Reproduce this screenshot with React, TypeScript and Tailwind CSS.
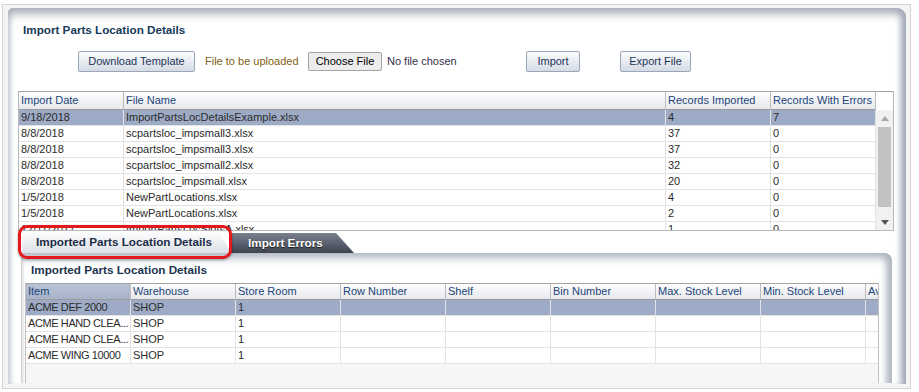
import React from "react";

/**
 * Import Parts Location Details screen (ADF style panel with file grid
 * and a tabbed detail table below).
 */

const FILE_COLS = [
  { label: "Import Date", w: "w-[105px]" },
  { label: "File Name", w: "w-[542px]" },
  { label: "Records Imported", w: "w-[105px]" },
  { label: "Records With Errors", w: "w-[105px]" },
];

const FILE_ROWS = [
  ["9/18/2018", "ImportPartsLocDetailsExample.xlsx", "4", "7"],
  ["8/8/2018", "scpartsloc_impsmall3.xlsx", "37", "0"],
  ["8/8/2018", "scpartsloc_impsmall3.xlsx", "37", "0"],
  ["8/8/2018", "scpartsloc_impsmall2.xlsx", "32", "0"],
  ["8/8/2018", "scpartsloc_impsmall.xlsx", "20", "0"],
  ["1/5/2018", "NewPartLocations.xlsx", "4", "0"],
  ["1/5/2018", "NewPartLocations.xlsx", "2", "0"],
  ["12/11/2017", "ImportPartsLocSlotsA.xlsx", "1", "0"],
];

const PART_COLS = [
  "Item",
  "Warehouse",
  "Store Room",
  "Row Number",
  "Shelf",
  "Bin Number",
  "Max. Stock Level",
  "Min. Stock Level",
  "Available",
];

const PART_ROWS = [
  ["ACME DEF 2000", "SHOP", "1"],
  ["ACME HAND CLEA...", "SHOP", "1"],
  ["ACME HAND CLEA...", "SHOP", "1"],
  ["ACME WING 10000", "SHOP", "1"],
];

function AdfButton({ label, w }: { label: string; w: string }) {
  return (
    <button
      className={`${w} h-[21px] shrink-0 rounded-[2px] border border-[#9ba7b9] bg-[linear-gradient(#fbfcfd,#d5dbe5)] text-[11px] text-[#1d3557]`}
    >
      {label}
    </button>
  );
}

export default function App() {
  return (
    <div className="relative h-[392px] w-[919px] overflow-hidden bg-white font-['Liberation_Sans',Arial,sans-serif] text-[11px] text-[#2b2b2b]">
      {/* screenshot frame */}
      <div className="ml-[2px] mt-[4px] h-[385px] w-[909px] border border-[#d3d3d3] bg-[#f4f4f5] pl-[5px] pt-[3px]">
        {/* main panel */}
        <div className="h-[376px] w-[898px] rounded-tl-[5px] rounded-tr-[9px] bg-white shadow-[inset_0_13px_9px_-7px_#a9afbc,inset_6px_0_5px_-3px_#c9cdd4,inset_-9px_0_6px_-4px_#9ea5b3]">
          <div className="pl-[15px] pt-[14px] text-[11.7px] font-bold leading-[16px] text-[#183a5a]">
            Import Parts Location Details
          </div>

          {/* toolbar */}
          <div className="mt-[13px] flex h-[21px] items-center pl-[70px]">
            <AdfButton label="Download Template" w="w-[117px]" />
            <span className="ml-[10px] w-[103px] shrink-0 text-[#7f5f12]">File to be uploaded</span>
            <button className="h-[19px] w-[74px] shrink-0 rounded-[2px] border border-[#a3a3a3] bg-[#ececec] text-[11px] text-black">
              Choose File
            </button>
            <span className="ml-[5px] w-[139px] shrink-0 text-[#34304a]">No file chosen</span>
            <AdfButton label="Import" w="w-[54px]" />
            <div className="ml-[40px]">
              <AdfButton label="Export File" w="w-[71px]" />
            </div>
          </div>

          {/* files grid */}
          <div className="ml-[10px] mt-[19px] w-[876px] border border-[#b8b8b8] border-t-[#a3a3a3]">
            <div className="flex h-[18px]">
              {FILE_COLS.map((c) => (
                <div
                  key={c.label}
                  className={`${c.w} shrink-0 border-b border-r border-b-[#9b9b9b] border-r-[#bdbdbd] bg-[linear-gradient(#fdfdfe,#e6e8ec)] pl-[2px] leading-[17px] text-[#22457a]`}
                >
                  {c.label}
                </div>
              ))}
              <div className="w-[17px] shrink-0 bg-white" />
            </div>
            <div className="flex h-[120px]">
              <div className="w-[857px] shrink-0 overflow-hidden">
                {FILE_ROWS.map((row, i) => (
                  <div
                    key={i}
                    className={`flex h-[16px] border-b border-[#e3e3e3] ${i === 0 ? "bg-[#9dabc6]" : "bg-white"}`}
                  >
                    {row.map((v, j) => (
                      <div
                        key={j}
                        className={`${FILE_COLS[j].w} shrink-0 truncate border-r border-[#e3e3e3] pl-[2px] leading-[15px]`}
                      >
                        {v}
                      </div>
                    ))}
                  </div>
                ))}
              </div>
              {/* scrollbar */}
              <div className="flex w-[17px] shrink-0 flex-col items-center bg-[#f1f1f1]">
                <div className="flex h-[16px] items-center justify-center">
                  <svg width="8" height="5" viewBox="0 0 8 5">
                    <polygon points="4,0 8,5 0,5" fill="#a8a8a8" />
                  </svg>
                </div>
                <div className="mt-[1px] h-[80px] w-[13px] bg-[#c2c2c2]" />
                <div className="mt-[7px] flex h-[16px] items-center justify-center">
                  <svg width="8" height="5" viewBox="0 0 8 5">
                    <polygon points="0,0 8,0 4,5" fill="#555555" />
                  </svg>
                </div>
              </div>
            </div>
          </div>

          {/* tab strip */}
          <div className="ml-[14px] flex h-[22px] items-end">
            <div className="h-[22px] w-[210px] shrink-0 rounded-tl-[4px] bg-[linear-gradient(#ffffff,#dce0e7)] pl-[14px] text-[11.7px] font-bold leading-[22px] text-[#1d2d4a] [clip-path:polygon(0_0,calc(100%_-_14px)_0,100%_100%,0_100%)]">
              Imported Parts Location Details
            </div>
            <div className="-ml-[2px] h-[20px] w-[124px] shrink-0 rounded-tl-[4px] bg-[linear-gradient(#7b818e,#3d4351)] pl-[18px] text-[11.7px] font-bold leading-[20px] text-white [clip-path:polygon(0_0,calc(100%_-_18px)_0,100%_100%,0_100%)] [text-shadow:0_1px_1px_#1a1a1a]">
              Import Errors
            </div>
          </div>

          {/* tab panel */}
          <div className="ml-[13px] h-[130px] w-[871px] rounded-tr-[8px] border-l border-[#d0d3d8] bg-white shadow-[inset_0_12px_9px_-7px_#aeb4c0,inset_3px_0_3px_-2px_#d5d8dd,inset_-11px_0_6px_-5px_#b3b8c2]">
            <div className="pl-[9px] pt-[9px] text-[11.7px] font-bold leading-[16px] text-[#1d3550]">
              Imported Parts Location Details
            </div>
            <div className="ml-[3px] mt-[5px] h-[100px] w-[854px] overflow-hidden border-x border-t border-[#c2c2c2] border-t-[#a3a3a3] bg-[#f5f6f8]">
              <div className="flex h-[16px] w-[960px]">
                {PART_COLS.map((c, i) => (
                  <div
                    key={c}
                    className={`w-[105px] shrink-0 border-b border-r border-b-[#9b9b9b] border-r-[#bdbdbd] pl-[2px] leading-[15px] text-[#22457a] ${i === 0 ? "bg-[linear-gradient(#b9c3d5,#a7b3c9)]" : "bg-[linear-gradient(#fdfdfe,#e6e8ec)]"}`}
                  >
                    {c}
                  </div>
                ))}
              </div>
              {PART_ROWS.map((row, i) => (
                <div
                  key={i}
                  className={`flex h-[16px] w-[960px] border-b border-[#e3e3e3] ${i === 0 ? "bg-[#9dabc6]" : "bg-white"}`}
                >
                  {PART_COLS.map((c, j) => (
                    <div
                      key={c}
                      className={`w-[105px] shrink-0 overflow-hidden whitespace-nowrap border-r border-[#e3e3e3] pl-[2px] leading-[15px] ${j === 0 ? "tracking-[-0.4px]" : ""}`}
                    >
                      {row[j] ?? ""}
                    </div>
                  ))}
                </div>
              ))}
            </div>
          </div>
        </div>
      </div>

      {/* red annotation around the active tab */}
      <div className="pointer-events-none absolute left-[18px] top-[225px] h-[34px] w-[214px] rounded-[9px] border-[3px] border-[#e2181d] shadow-[0_1px_3px_rgba(0,0,0,0.35)]" />
    </div>
  );
}
